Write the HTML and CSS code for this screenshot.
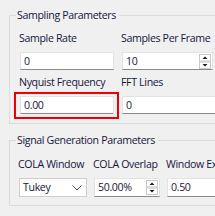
FILE: index.html
```html
<!DOCTYPE html>
<html>
<head>
<meta charset="utf-8">
<link rel="stylesheet" href="styles.css">
</head>
<body>
<div class="page">
  <fieldset class="group g1">
    <legend>Sampling Parameters</legend>
    <div class="grid two">
      <div class="cell">
        <span class="lbl">Sample Rate</span>
        <div class="field">0</div>
      </div>
      <div class="cell">
        <span class="lbl">Samples Per Frame</span>
        <div class="field spin"><span class="val">10</span><span class="spinbtn"><svg width="12" height="15" viewBox="0 0 12 15"><rect x="0.5" y="0.5" width="11" height="6.5" fill="#fff" stroke="#c8c8c8"/><rect x="0.5" y="8" width="11" height="6.5" fill="#fff" stroke="#c8c8c8"/><path d="M3.5 5 L6 2.5 L8.5 5 Z" fill="#1a1a1a"/><path d="M3.5 10 L6 12.5 L8.5 10 Z" fill="#1a1a1a"/></svg></span></div>
      </div>
      <div class="cell">
        <span class="lbl">Nyquist Frequency</span>
        <div class="field hl">0.00<span class="mark"></span></div>
      </div>
      <div class="cell">
        <span class="lbl">FFT Lines</span>
        <div class="field">0</div>
      </div>
    </div>
  </fieldset>
  <fieldset class="group g2">
    <legend>Signal Generation Parameters</legend>
    <div class="grid three">
      <div class="cell">
        <span class="lbl">COLA Window</span>
        <div class="field combo"><span class="val">Tukey</span><svg class="chev" width="10" height="6" viewBox="0 0 10 6"><path d="M0.5 0.5 L5 5 L9.5 0.5" fill="none" stroke="#555" stroke-width="1"/></svg></div>
      </div>
      <div class="cell">
        <span class="lbl">COLA Overlap</span>
        <div class="field spin"><span class="val">50.00%</span><span class="spinbtn"><svg width="12" height="15" viewBox="0 0 12 15"><rect x="0.5" y="0.5" width="11" height="6.5" fill="#fff" stroke="#c8c8c8"/><rect x="0.5" y="8" width="11" height="6.5" fill="#fff" stroke="#c8c8c8"/><path d="M3.5 5 L6 2.5 L8.5 5 Z" fill="#1a1a1a"/><path d="M3.5 10 L6 12.5 L8.5 10 Z" fill="#1a1a1a"/></svg></span></div>
      </div>
      <div class="cell">
        <span class="lbl">Window Exponent</span>
        <div class="field">0.50</div>
      </div>
    </div>
  </fieldset>
  <fieldset class="group g3">
    <legend>CPSD Parameters</legend>
    <div class="grid two">
      <div class="cell"><span class="lbl">Overlap</span></div>
    </div>
  </fieldset>
</div>
</body>
</html>
```
FILE: styles.css
```css
html, body {
  margin: 0;
  padding: 0;
  background: #f0f0f0;
  overflow: hidden;
}
.page {
  width: 215px;
  height: 216px;
  overflow: hidden;
  padding-top: 8px;
  box-sizing: border-box;
  font-family: "Open Sans", "Noto Sans", sans-serif;
  font-size: 10.6px;
  letter-spacing: -0.35px;
  color: #16163e;
}
.group {
  margin: 0 0 9px 9px;
  padding: 0 0 0 10px;
  width: 260px;
  box-sizing: border-box;
  border: 1px solid #dcdcdc;
  border-right: none;
  min-width: 0;
}
.group legend {
  margin-left: -4px;
  padding: 0 3px 0 1px;
  line-height: 14px;
  height: 14px;
}
.grid {
  display: grid;
  column-gap: 8px;
}
.grid.two {
  grid-template-columns: 94px 94px;
  row-gap: 5px;
  padding: 9px 0 9px 0;
}
.g1 .grid .cell:nth-child(2) .field { width: 91px; }
.grid.three {
  grid-template-columns: 68px 66px 66px;
  column-gap: 7px;
  padding: 10px 0 8px 0;
  margin-left: -1px;
}
.cell {
  display: flex;
  flex-direction: column;
  gap: 7px;
}
.lbl {
  line-height: 14px;
  height: 14px;
  white-space: nowrap;
  margin-left: -1px;
}
.field {
  position: relative;
  height: 18px;
  box-sizing: border-box;
  background: #fff;
  border: 1px solid #e3e3e3;
  border-bottom-color: #8a8a8a;
  padding: 0 3px;
  line-height: 17px;
  display: flex;
  align-items: center;
}
.g2 .field {
  height: 19px;
}
.field.spin,
.field.combo {
  justify-content: space-between;
  padding-right: 1px;
}
.spinbtn {
  display: flex;
}
.field.combo {
  padding-right: 4px;
  border-color: #cfcfcf;
}
.chev {
  display: block;
}
.mark {
  position: absolute;
  left: -7px;
  top: -5px;
  right: -6px;
  bottom: -6px;
  border: 2px solid #ee0000;
  pointer-events: none;
}
```
